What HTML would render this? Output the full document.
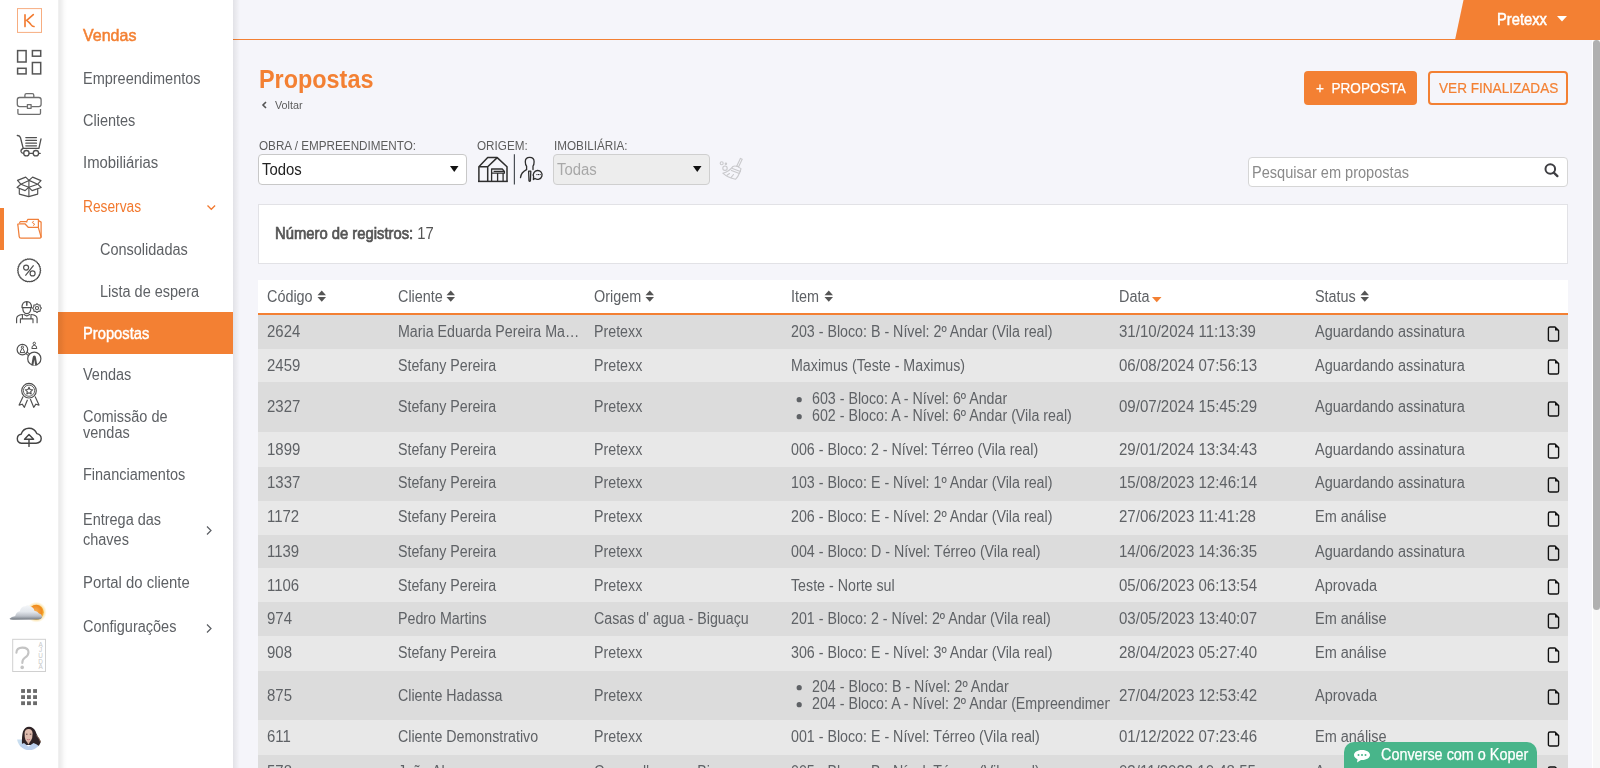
<!DOCTYPE html>
<html><head><meta charset="utf-8"><style>
*{box-sizing:border-box;margin:0;padding:0}
html,body{width:1600px;height:768px;overflow:hidden;background:#f5f5fa;font-family:"Liberation Sans",sans-serif;color:#5c5c5c}
#iconbar{position:absolute;left:0;top:0;width:58px;height:768px;background:#fff}
#sidebar{position:absolute;left:58px;top:0;width:175px;height:768px;background:#fff}
#sideshadow{position:absolute;z-index:5;left:58px;top:0;width:10px;height:768px;background:linear-gradient(to right,rgba(0,0,0,.04) 0,rgba(0,0,0,.08) 1px,rgba(0,0,0,.07) 2px,rgba(0,0,0,.05) 4px,rgba(0,0,0,.02) 6px,rgba(0,0,0,0) 9px)}
#mainshadow{position:absolute;z-index:5;left:233px;top:0;width:7px;height:768px;background:linear-gradient(to right,rgba(0,0,0,.08),rgba(0,0,0,0))}
.t{position:absolute;white-space:nowrap;line-height:1;transform-origin:0 0}
.row{position:absolute;left:258px;width:1310px}
.odd{background:#dcdcdc}.even{background:#e8e8e8}
</style></head><body>
<div id="iconbar"></div><div id="sidebar"></div><div id="sideshadow"></div><div id="mainshadow"></div>
<svg style="position:absolute;left:0;top:0" width="58" height="768" viewBox="0 0 58 768"><rect x="17.5" y="8.6" width="24" height="23.8" fill="none" stroke="#f7ad80" stroke-width="1"/><path d="M25,14.7 V26.6 M33.3,14.6 L26.7,20.3 Q29.4,22.2 31,24.6 Q32.4,26.6 34,26.5" fill="none" stroke="#f27b30" stroke-width="1.65" stroke-linecap="round" stroke-linejoin="round"/><g fill="none" stroke="#555" stroke-width="1.5"><rect x="17.6" y="50.6" width="8.5" height="11.4"/><rect x="32.4" y="50.6" width="8.3" height="5.6"/><rect x="17.6" y="68.3" width="8.5" height="5.6"/><rect x="32.4" y="62.5" width="8.3" height="11.4"/></g><g fill="none" stroke="#6e6e6e" stroke-width="1.3" stroke-linejoin="round"><path d="M24.9,96.9 V95.2 Q24.9,93.7 26.4,93.7 H32.3 Q33.8,93.7 33.8,95.2 V96.9"/><path d="M26.9,106.6 H19.6 Q17.3,106.6 17.3,104.3 V99.8 Q17.3,97.5 19.6,97.5 H38.8 Q41.1,97.5 41.1,99.8 V104.3 Q41.1,106.6 38.8,106.6 H31.4"/><rect x="27.4" y="104.6" width="3.7" height="3.7"/><path d="M17.9,108.9 V113.2 Q17.9,114.3 19,114.3 H39.4 Q40.5,114.3 40.5,113.2 V108.9"/></g><g fill="none" stroke="#505050" stroke-width="1.3" stroke-linecap="round" stroke-linejoin="round"><path d="M17.3,135.5 Q19.8,135.3 20.5,137.8 L23.2,148.3 H38.9 L41,138.8"/><path d="M23.2,148.3 Q20.4,149.6 21.1,151.8 Q21.8,153.4 23.6,153.4 M29.2,153.4 H33.1 M38.7,153.4 H40.2"/><circle cx="26.4" cy="153.2" r="2.7"/><circle cx="35.9" cy="153.2" r="2.7"/><path d="M25.8,137.6 H36.5 M25.8,140.4 H36.5 M25.8,143.2 H36.5 M25.8,145.8 H36.5" stroke-width="1.2"/></g><g fill="none" stroke="#505050" stroke-width="1.15" stroke-linejoin="round"><path d="M29,180.4 L20.8,184.2 L28.8,187.3 L37.7,184.2 Z"/><path d="M29,180.4 L25.7,177.1 L17.5,180.4 L20.8,184.2"/><path d="M29,180.4 L32.6,177.1 L41,180.6 L37.7,184.2"/><path d="M20.8,184.2 L17.1,187.5 L25.1,190.6 L28.8,187.3"/><path d="M37.7,184.2 L41.2,187.5 L32.1,190.6 L28.8,187.3"/><path d="M19.3,188.3 V194.1 L28.7,196.6 L37.7,194.1 V188.6"/><path d="M28.9,180.6 V196.5"/></g><rect x="0" y="208" width="4" height="42" fill="#f38033"/><g fill="none" stroke="#f07f3a" stroke-width="1.25" stroke-linejoin="round"><path d="M17.8,224.2 L19.2,236.6 Q19.4,238 20.8,238 H39.9 Q41.2,238 41,236.7 L38.3,227.3 H28.2 L24.9,223.8 H19.2 Q17.7,223.8 17.8,225.2 Z"/><path d="M19.4,223 L20.4,221.5 H26.4 L27.2,222.4"/><path d="M26.8,221.2 L27.9,219.3 H38.4 V227.2"/><path d="M38.5,220.6 L41.1,222.1 V237.4"/><path d="M33.7,220.9 L32.3,222.6 L34.6,224 L33.4,225.8" stroke-width="1"/></g><g fill="none" stroke="#505050" stroke-width="1.2"><polygon points="40.65,270.35 40.12,271.21 40.51,272.15 39.85,272.92 40.09,273.90 39.31,274.56 39.40,275.57 38.53,276.10 38.45,277.11 37.51,277.49 37.28,278.48 36.29,278.71 35.91,279.65 34.90,279.73 34.37,280.60 33.36,280.51 32.70,281.29 31.72,281.05 30.95,281.71 30.01,281.32 29.15,281.85 28.29,281.32 27.35,281.71 26.58,281.05 25.60,281.29 24.94,280.51 23.93,280.60 23.40,279.73 22.39,279.65 22.01,278.71 21.02,278.48 20.79,277.49 19.85,277.11 19.77,276.10 18.90,275.57 18.99,274.56 18.21,273.90 18.45,272.92 17.79,272.15 18.18,271.21 17.65,270.35 18.18,269.49 17.79,268.55 18.45,267.78 18.21,266.80 18.99,266.14 18.90,265.13 19.77,264.60 19.85,263.59 20.79,263.21 21.02,262.22 22.01,261.99 22.39,261.05 23.40,260.97 23.93,260.10 24.94,260.19 25.60,259.41 26.58,259.65 27.35,258.99 28.29,259.38 29.15,258.85 30.01,259.38 30.95,258.99 31.72,259.65 32.70,259.41 33.36,260.19 34.37,260.10 34.90,260.97 35.91,261.05 36.29,261.99 37.28,262.22 37.51,263.21 38.45,263.59 38.53,264.60 39.40,265.13 39.31,266.14 40.09,266.80 39.85,267.78 40.51,268.55 40.12,269.49"/><circle cx="26.1" cy="267.6" r="2.5"/><circle cx="32.6" cy="273.4" r="2.5"/><path d="M25.4,275.6 L33.6,265.4"/></g><g fill="none" stroke="#505050" stroke-width="1.15" stroke-linejoin="round" stroke-linecap="round"><path d="M22,307.6 Q22,301.6 26.8,301.6 Q31.5,301.6 31.5,307.6 Z"/><path d="M26.8,302.2 V305.2" stroke-width="1.5"/><path d="M22.8,308.2 Q22.9,313.4 26.8,313.6 Q30.7,313.4 30.8,308.2"/><path d="M16.6,322.7 V318.5 Q16.8,315.2 22.2,314.5 M37.1,322.7 V318.5 Q36.9,315.2 31.5,314.5"/><path d="M23.9,314.5 L26.8,315.9 L29.7,314.5"/><path d="M22.4,314.6 V318.9 H31 V314.6 M20.4,322.7 V318.9 H22.4 M33,322.7 V318.9 H31" stroke-width="1.1"/></g><polygon points="41.40,308.10 40.23,309.44 40.11,311.21 38.34,311.33 37.00,312.50 35.66,311.33 33.89,311.21 33.77,309.44 32.60,308.10 33.77,306.76 33.89,304.99 35.66,304.87 37.00,303.70 38.34,304.87 40.11,304.99 40.23,306.76" fill="none" stroke="#505050" stroke-width="1.1" stroke-linejoin="round"/><circle cx="37" cy="308.1" r="1.6" fill="none" stroke="#505050" stroke-width="1.1"/><g fill="none" stroke="#505050" stroke-width="1.2"><circle cx="22.4" cy="349.6" r="5.3"/><circle cx="34.3" cy="358.7" r="6.6"/><path d="M25.9,353.6 L28.6,355.6 M27.1,352.1 L29.8,354.1" stroke-width="1.1"/><circle cx="22.4" cy="347.2" r="1.1" stroke-width="1"/><path d="M21.9,348.4 L20,352.6 H24.8 L22.9,348.4" stroke-width="1"/><circle cx="34.3" cy="343.4" r="1.2" stroke-width="1"/><path d="M31.8,348.5 Q31.8,345.3 34.3,345.3 Q36.8,345.3 36.8,348.5 Z" stroke-width="1"/></g><path d="M34.3,355.6 Q32.8,355.6 32.6,357.8 L31.3,365.3 H37.3 L36,357.8 Q35.8,355.6 34.3,355.6 Z" fill="#505050"/><path d="M34.3,359.6 L33.4,365.4 H35.2 Z" fill="#fff"/><g fill="none" stroke="#505050" stroke-width="1.15" stroke-linejoin="round"><circle cx="29" cy="390.7" r="7.3"/><circle cx="29" cy="390.7" r="5.6" stroke-width="0.9"/><path d="M23.1,396.5 L19.1,405.1 L22.2,404.2 L24.4,407.3 L27.5,399.8"/><path d="M35.1,396.6 L39,405.1 L35.9,404.2 L33.7,407.3 L30.3,399"/><polygon points="29.00,387.30 30.06,389.54 32.52,389.86 30.71,391.56 31.17,393.99 29.00,392.80 26.83,393.99 27.29,391.56 25.48,389.86 27.94,389.54"/></g><g fill="none" stroke="#444" stroke-width="1.4" stroke-linejoin="round" stroke-linecap="round"><path d="M21.3,443.2 Q17.3,443 17.3,438.6 Q17.5,434.6 21.1,434.2 Q23.2,428.2 29,428.2 Q34.6,428.2 36.8,433.6 Q41.2,434.6 41.2,438.6 Q41,443 36.1,443.2 Z"/><path d="M29,434.5 L24.5,439.2 H33.6 Z"/><path d="M29,439.4 V446.4"/></g><defs><radialGradient id="sun" cx="0.45" cy="0.45" r="0.6"><stop offset="0" stop-color="#f7b05a"/><stop offset="0.7" stop-color="#f08a1c"/><stop offset="1" stop-color="#f6c84a"/></radialGradient><linearGradient id="cld" x1="0" y1="0" x2="0" y2="1"><stop offset="0" stop-color="#eef1f5"/><stop offset="0.55" stop-color="#d6dae0"/><stop offset="1" stop-color="#7f858d"/></linearGradient><filter id="bl" x="-20%" y="-20%" width="140%" height="140%"><feGaussianBlur stdDeviation="0.5"/></filter></defs><defs><radialGradient id="glow" cx="0.5" cy="0.5" r="0.5"><stop offset="0.6" stop-color="#f7c45a" stop-opacity=".9"/><stop offset="1" stop-color="#fbe3a0" stop-opacity="0"/></radialGradient><linearGradient id="cld2" x1="0" y1="0" x2="0" y2="1"><stop offset="0" stop-color="#f4f6f9"/><stop offset="0.45" stop-color="#e3e7ec"/><stop offset="0.75" stop-color="#b9bec6"/><stop offset="1" stop-color="#6f757d"/></linearGradient></defs><circle cx="36.3" cy="612.2" r="10.5" fill="url(#glow)"/><circle cx="36.3" cy="612.2" r="7.5" fill="url(#sun)"/><g filter="url(#bl)" fill="url(#cld2)"><path d="M9.5,618.8 Q11.5,616.6 15.2,616 Q16.2,611.8 19.8,611.2 Q21,606.2 25.2,606.2 Q28,604.2 30.8,606.8 Q33.8,607.4 34.4,610.8 Q37.8,611.2 39,613.6 Q42.2,614.2 42,617.6 Q41.2,619.6 38,619.5 L13.5,619.8 Q10,619.9 9.5,618.8 Z"/></g><path d="M13,618.8 H39" stroke="#6a7078" stroke-width="1.2" opacity=".6" filter="url(#bl)"/><rect x="12.7" y="639.3" width="32.8" height="32.2" fill="none" stroke="#d0d0d0" stroke-width="1"/><path d="M16.4,652.8 Q16.6,647.6 22.3,647.6 Q28.5,647.6 28.5,652.3 Q28.5,655.5 25,657.7 Q22.3,659.4 22.3,663" fill="none" stroke="#c4c4c4" stroke-width="2.1" stroke-linecap="round"/><circle cx="22.2" cy="667.4" r="1.8" fill="#c4c4c4"/><text x="40.6" y="646.6" font-family="Liberation Sans" font-size="6.4" fill="#c8c8c8" text-anchor="middle">A</text><text x="40.6" y="652.3" font-family="Liberation Sans" font-size="6.4" fill="#c8c8c8" text-anchor="middle">J</text><text x="40.6" y="658.0" font-family="Liberation Sans" font-size="6.4" fill="#c8c8c8" text-anchor="middle">U</text><text x="40.6" y="663.7" font-family="Liberation Sans" font-size="6.4" fill="#c8c8c8" text-anchor="middle">D</text><text x="40.6" y="669.4" font-family="Liberation Sans" font-size="6.4" fill="#c8c8c8" text-anchor="middle">A</text><rect x="21.1" y="689.1" width="3.9" height="3.8" fill="#6b6b6b"/><rect x="21.1" y="695.2" width="3.9" height="3.8" fill="#6b6b6b"/><rect x="21.1" y="701.3" width="3.9" height="3.8" fill="#6b6b6b"/><rect x="27.0" y="689.1" width="3.9" height="3.8" fill="#6b6b6b"/><rect x="27.0" y="695.2" width="3.9" height="3.8" fill="#6b6b6b"/><rect x="27.0" y="701.3" width="3.9" height="3.8" fill="#6b6b6b"/><rect x="33.1" y="689.1" width="3.9" height="3.8" fill="#6b6b6b"/><rect x="33.1" y="695.2" width="3.9" height="3.8" fill="#6b6b6b"/><rect x="33.1" y="701.3" width="3.9" height="3.8" fill="#6b6b6b"/><defs><clipPath id="av"><circle cx="29.3" cy="737.8" r="12.3"/></clipPath></defs><g clip-path="url(#av)"><g filter="url(#bl)"><rect x="16" y="724" width="27" height="27" fill="#fff"/><rect x="16" y="739.5" width="6" height="6" fill="#c9def0"/><path d="M22,745 Q21.6,736 23,731.5 Q24.8,726.8 29,726.8 Q33.4,727 35.4,731 Q36.6,734.5 38.4,737.5 Q40.6,740.5 41.6,744 L38.6,747 L34.5,745 Z" fill="#2e2426"/><path d="M36.5,735.5 Q39.5,738.5 40.5,742" stroke="#8a6a5a" stroke-width="1" fill="none"/><path d="M24.6,733 Q24.9,729 28.7,729 Q32.4,729.2 32.6,733.4 Q32.6,738.2 31,740.6 Q29.6,742.2 28.4,742.2 Q26.6,742 25.5,740 Q24.4,737.4 24.6,733 Z" fill="#e0bcae"/><path d="M26.9,739.4 Q28.5,740.2 30.1,739.4" stroke="#c0767a" stroke-width=".9" fill="none"/><path d="M26,734.2 H27.5 M29.8,734.2 H31.3" stroke="#4a3434" stroke-width=".9"/><path d="M26.5,741 L28.4,744.5 L30.5,741 Z" fill="#d7b0a2"/><path d="M15,752 Q17.5,745 24,743 L28.4,746.4 L33.5,743 Q39.5,744.5 43,752 Z" fill="#bcd0ee"/></g></g></svg>
<div style="position:absolute;left:233px;top:39px;width:1230px;height:1px;background:#f38033"></div>
<svg style="position:absolute;left:1455px;top:0" width="145" height="40"><polygon points="8.5,0 145,0 145,40 0,40" fill="#f38033"/></svg>
<div class="t" style="left:1496.5px;top:12.3px;font-size:16px;color:#fff;font-weight:normal;transform:scaleX(0.920);-webkit-text-stroke:.5px #fff">Pretexx</div>
<svg style="position:absolute;left:1557px;top:16px" width="10" height="6"><polygon points="0,0 10,0 5,5.5" fill="#fff"/></svg>
<div style="position:absolute;left:1592px;top:40px;width:8px;height:728px;background:linear-gradient(to right,#fff 0,#fff 1px,#f7f7f7 1px)"></div>
<div style="position:absolute;left:1593px;top:40px;width:7px;height:570px;background:#b0b0b0;border-radius:4px"></div>
<div class="t" style="left:83.2px;top:27.3px;font-size:16.5px;color:#f38033;font-weight:normal;transform:scaleX(0.970);-webkit-text-stroke:.5px #f38033">Vendas</div>
<div class="t" style="left:83.0px;top:70.5px;font-size:16px;color:#5e6165;font-weight:normal;transform:scaleX(0.905);">Empreendimentos</div>
<div class="t" style="left:83.0px;top:112.5px;font-size:16px;color:#5e6165;font-weight:normal;transform:scaleX(0.905);">Clientes</div>
<div class="t" style="left:83.0px;top:154.8px;font-size:16px;color:#5e6165;font-weight:normal;transform:scaleX(0.930);">Imobiliárias</div>
<div class="t" style="left:83.0px;top:199.4px;font-size:16px;color:#f2792f;font-weight:normal;transform:scaleX(0.860);">Reservas</div>
<div class="t" style="left:100.0px;top:242.3px;font-size:16px;color:#5e6165;font-weight:normal;transform:scaleX(0.905);">Consolidadas</div>
<div class="t" style="left:99.7px;top:283.9px;font-size:16px;color:#5e6165;font-weight:normal;transform:scaleX(0.905);">Lista de espera</div>
<div style="position:absolute;left:58px;top:312px;width:175px;height:42px;background:#f38033"></div>
<div class="t" style="left:83.0px;top:325.7px;font-size:16px;color:#fff;font-weight:normal;transform:scaleX(0.920);-webkit-text-stroke:.45px #fff">Propostas</div>
<div class="t" style="left:83.0px;top:367.2px;font-size:16px;color:#5e6165;font-weight:normal;transform:scaleX(0.905);">Vendas</div>
<div class="t" style="left:83.0px;top:409.0px;font-size:16px;color:#5e6165;font-weight:normal;transform:scaleX(0.905);">Comissão de</div>
<div class="t" style="left:83.0px;top:425.0px;font-size:16px;color:#5e6165;font-weight:normal;transform:scaleX(0.905);">vendas</div>
<div class="t" style="left:83.0px;top:467.3px;font-size:16px;color:#5e6165;font-weight:normal;transform:scaleX(0.905);">Financiamentos</div>
<div class="t" style="left:83.0px;top:511.6px;font-size:16px;color:#5e6165;font-weight:normal;transform:scaleX(0.905);">Entrega das</div>
<div class="t" style="left:83.0px;top:531.6px;font-size:16px;color:#5e6165;font-weight:normal;transform:scaleX(0.905);">chaves</div>
<div class="t" style="left:83.0px;top:575.0px;font-size:16px;color:#5e6165;font-weight:normal;transform:scaleX(0.930);">Portal do cliente</div>
<div class="t" style="left:83.0px;top:619.0px;font-size:16px;color:#5e6165;font-weight:normal;transform:scaleX(0.905);">Configurações</div>
<svg style="position:absolute;left:205.5px;top:202.8px" width="11" height="9"><polyline points="1.5,2.5 5.3,6.3 9.1,2.5" fill="none" stroke="#f2792f" stroke-width="1.3"/></svg>
<svg style="position:absolute;left:205px;top:525px" width="8" height="12"><polyline points="2,1.5 6,5.5 2,9.5" fill="none" stroke="#5a5d62" stroke-width="1.2"/></svg>
<svg style="position:absolute;left:205px;top:623px" width="8" height="12"><polyline points="2,1.5 6,5.5 2,9.5" fill="none" stroke="#5a5d62" stroke-width="1.2"/></svg>
<div class="t" style="left:259.0px;top:66.0px;font-size:26px;color:#f38033;font-weight:bold;transform:scaleX(0.900);">Propostas</div>
<svg style="position:absolute;left:261px;top:101px" width="7" height="8"><polyline points="5,1 2,4 5,7" fill="none" stroke="#555" stroke-width="1.6"/></svg>
<div class="t" style="left:275.0px;top:100.0px;font-size:11px;color:#5c5c5c;font-weight:normal;transform:scaleX(0.980);">Voltar</div>
<div class="t" style="left:258.6px;top:139.7px;font-size:12px;color:#5c5c5c;font-weight:normal;transform:scaleX(0.975);">OBRA / EMPREENDIMENTO:</div>
<div class="t" style="left:477.3px;top:139.7px;font-size:12px;color:#5c5c5c;font-weight:normal;transform:scaleX(0.975);">ORIGEM:</div>
<div class="t" style="left:553.7px;top:139.7px;font-size:12px;color:#5c5c5c;font-weight:normal;transform:scaleX(0.975);">IMOBILIÁRIA:</div>
<div style="position:absolute;left:258px;top:154px;width:209px;height:31px;background:#fff;border:1px solid #c8c8c8;border-radius:4px"></div>
<div class="t" style="left:262.2px;top:161.8px;font-size:16px;color:#222;font-weight:normal;transform:scaleX(0.930);">Todos</div>
<svg style="position:absolute;left:449.5px;top:166px" width="9" height="7"><polygon points="0,0 8.5,0 4.25,6" fill="#111"/></svg>
<svg style="position:absolute;left:470px;top:150px" width="80" height="40" viewBox="470 150 80 40"><g fill="none" stroke="#2e2e2e" stroke-width="1.5" stroke-linejoin="round"><path d="M478,181.4 H507.8"/><path d="M478.9,181.4 V166.8 L487.7,157.6 H497.2 L507,166.8 V181.4"/><path d="M478.9,166.8 H487.7 L497.2,157.6 M487.7,166.8 V181.4"/><path d="M491.6,181.4 V169 H502.3 L504.4,171.4 V173.2 H491.6 M493.6,171.4 H503.8 M497.6,173.2 V181.4 M503.1,173.2 V181.4" stroke-width="1.3"/></g><path d="M514.4,154.2 V184.6" stroke="#4a4f55" stroke-width="1.2"/><g fill="none" stroke="#2e2e2e" stroke-width="1.3" stroke-linejoin="round" stroke-linecap="round"><path d="M526.6,169.6 V166.2 Q525.3,164.8 525.3,161.8 Q525.3,157.4 529.7,157.4 Q534.1,157.4 534.1,161.8 Q534.1,164.8 533,166.2 V169.6"/><path d="M526.5,169.6 Q521,172.4 520.5,177.6"/><path d="M528.6,171.2 H530.8 L530.4,180.8 Q529.7,181.8 529,180.8 Z"/><path d="M535,178.4 A4.4,4.4 0 1 0 533.6,176.6 L533.4,179.6 Z"/></g><g fill="#2e2e2e"><rect x="536.4" y="174" width="1.1" height="1.1"/><rect x="538" y="174" width="1.1" height="1.1"/><rect x="539.6" y="174" width="1.1" height="1.1"/></g></svg><svg style="position:absolute;left:714px;top:150px" width="36" height="36" viewBox="714 150 36 36"><g fill="none" stroke="#c9c9cc" stroke-width="1.1" stroke-linejoin="round" stroke-linecap="round"><path d="M740.4,158.4 L742.2,159.2 L738.6,166.8 L736.8,166"/><path d="M740.4,158.4 L736.8,166"/><path d="M733,166.4 Q736,165 741,168.6 L740,172 Q738,177 735.5,179.3 Q728,178 722.8,173.2 Q729,172 733,166.4 Z"/><path d="M732.4,168.6 L740.4,171.4 M731.5,170.4 L739.4,173.4 M727,175.2 L729.5,173.5 M731,177.6 L733.5,174.5"/><circle cx="725" cy="168.2" r="2.2"/><circle cx="721.7" cy="163.3" r="1.5"/><circle cx="725.9" cy="163.7" r="0.7"/></g></svg>
<div style="position:absolute;left:553px;top:154px;width:157px;height:31px;background:#ededed;border:1px solid #cfcfcf;border-radius:4px"></div>
<div class="t" style="left:557.0px;top:161.8px;font-size:16px;color:#a8a8a8;font-weight:normal;transform:scaleX(0.930);">Todas</div>
<svg style="position:absolute;left:692.5px;top:166px" width="9" height="7"><polygon points="0,0 8.5,0 4.25,6" fill="#111"/></svg>
<div style="position:absolute;left:1304px;top:71px;width:113px;height:34px;background:#f38033;border-radius:4px"></div>
<div class="t" style="left:1316.3px;top:80.0px;font-size:15px;color:#fff;font-weight:normal;transform:scaleX(0.905);-webkit-text-stroke:.25px #fff">+&nbsp; PROPOSTA</div>
<div style="position:absolute;left:1428px;top:71px;width:140px;height:34px;background:transparent;border:2px solid #f38033;border-radius:4px"></div>
<div class="t" style="left:1438.6px;top:80.3px;font-size:15px;color:#f38033;font-weight:normal;transform:scaleX(0.906);-webkit-text-stroke:.2px #f38033">VER FINALIZADAS</div>
<div style="position:absolute;left:1248px;top:157px;width:320px;height:30px;background:#fff;border:1px solid #d6d6d6;border-radius:4px"></div>
<div class="t" style="left:1252.0px;top:165.4px;font-size:16px;color:#8a8a8a;font-weight:normal;transform:scaleX(0.910);">Pesquisar em propostas</div>
<svg style="position:absolute;left:1544px;top:163px" width="16" height="16"><circle cx="6.3" cy="6" r="4.8" fill="none" stroke="#3e3e42" stroke-width="2"/><line x1="9.8" y1="9.6" x2="13.4" y2="13.1" stroke="#3e3e42" stroke-width="2.3" stroke-linecap="round"/></svg>
<div style="position:absolute;left:258px;top:204px;width:1310px;height:60px;background:#fff;border:1px solid #e2e2e6"></div>
<div class="t" style="left:275.0px;top:225.9px;font-size:16px;color:#555;font-weight:normal;transform:scaleX(0.925);"><span style="-webkit-text-stroke:.7px #555">Número de registros:</span> 17</div>
<div style="position:absolute;left:258px;top:280px;width:1310px;height:33px;background:#fff"></div>
<div style="position:absolute;left:258px;top:313px;width:1310px;height:2px;background:#f38033"></div>
<div class="t" style="left:267.0px;top:288.5px;font-size:16px;color:#5e6165;font-weight:normal;transform:scaleX(0.900);">Código</div>
<svg style="position:absolute;left:316.5px;top:290px" width="10" height="13"><polygon points="0.5,5.2 9,5.2 4.75,0.5" fill="#555"/><polygon points="0.5,7 9,7 4.75,11.7" fill="#555"/></svg>
<div class="t" style="left:398.0px;top:288.5px;font-size:16px;color:#5e6165;font-weight:normal;transform:scaleX(0.900);">Cliente</div>
<svg style="position:absolute;left:446.0px;top:290px" width="10" height="13"><polygon points="0.5,5.2 9,5.2 4.75,0.5" fill="#555"/><polygon points="0.5,7 9,7 4.75,11.7" fill="#555"/></svg>
<div class="t" style="left:594.0px;top:288.5px;font-size:16px;color:#5e6165;font-weight:normal;transform:scaleX(0.900);">Origem</div>
<svg style="position:absolute;left:644.5px;top:290px" width="10" height="13"><polygon points="0.5,5.2 9,5.2 4.75,0.5" fill="#555"/><polygon points="0.5,7 9,7 4.75,11.7" fill="#555"/></svg>
<div class="t" style="left:791.0px;top:288.5px;font-size:16px;color:#5e6165;font-weight:normal;transform:scaleX(0.900);">Item</div>
<svg style="position:absolute;left:823.5px;top:290px" width="10" height="13"><polygon points="0.5,5.2 9,5.2 4.75,0.5" fill="#555"/><polygon points="0.5,7 9,7 4.75,11.7" fill="#555"/></svg>
<div class="t" style="left:1119.0px;top:288.5px;font-size:16px;color:#5e6165;font-weight:normal;transform:scaleX(0.900);">Data</div>
<div class="t" style="left:1315.0px;top:288.5px;font-size:16px;color:#5e6165;font-weight:normal;transform:scaleX(0.900);">Status</div>
<svg style="position:absolute;left:1359.5px;top:290px" width="10" height="13"><polygon points="0.5,5.2 9,5.2 4.75,0.5" fill="#555"/><polygon points="0.5,7 9,7 4.75,11.7" fill="#555"/></svg>
<svg style="position:absolute;left:1151.5px;top:297px" width="10" height="6"><polygon points="0,0 9.5,0 4.75,5.2" fill="#f38033"/></svg>
<div class="row odd" style="top:315.0px;height:34.3px"></div>
<div class="t" style="left:266.7px;top:324.0px;font-size:16px;color:#5f6266;font-weight:normal;transform:scaleX(0.935);">2624</div>
<div class="t" style="left:398.0px;top:324.0px;font-size:16px;color:#5f6266;font-weight:normal;transform:scaleX(0.890);">Maria Eduarda Pereira Ma…</div>
<div class="t" style="left:594.0px;top:324.0px;font-size:16px;color:#5f6266;font-weight:normal;transform:scaleX(0.890);">Pretexx</div>
<div class="t" style="left:791.0px;top:324.0px;font-size:16px;color:#5f6266;font-weight:normal;transform:scaleX(0.890);">203 - Bloco: B - Nível: 2º Andar (Vila real)</div>
<div class="t" style="left:1118.5px;top:324.0px;font-size:16px;color:#5f6266;font-weight:normal;transform:scaleX(0.940);">31/10/2024 11:13:39</div>
<div class="t" style="left:1315.0px;top:324.0px;font-size:16px;color:#5f6266;font-weight:normal;transform:scaleX(0.905);">Aguardando assinatura</div>
<svg style="position:absolute;left:1546.5px;top:325.7px" width="13" height="16"><path d="M1.4,2.6 Q1.4,1 3,1 L8,1 L11.6,4.6 L11.6,13.4 Q11.6,15 10,15 L3,15 Q1.4,15 1.4,13.4 Z" fill="none" stroke="#111" stroke-width="1.35" stroke-linejoin="round"/><path d="M8,1 L11.6,4.6 L8,4.6 Z" fill="#111"/></svg>
<div class="row even" style="top:348.7px;height:34.1px"></div>
<div class="t" style="left:266.7px;top:358.0px;font-size:16px;color:#5f6266;font-weight:normal;transform:scaleX(0.935);">2459</div>
<div class="t" style="left:398.0px;top:358.0px;font-size:16px;color:#5f6266;font-weight:normal;transform:scaleX(0.890);">Stefany Pereira</div>
<div class="t" style="left:594.0px;top:358.0px;font-size:16px;color:#5f6266;font-weight:normal;transform:scaleX(0.890);">Pretexx</div>
<div class="t" style="left:791.0px;top:358.0px;font-size:16px;color:#5f6266;font-weight:normal;transform:scaleX(0.890);">Maximus (Teste - Maximus)</div>
<div class="t" style="left:1118.5px;top:358.0px;font-size:16px;color:#5f6266;font-weight:normal;transform:scaleX(0.940);">06/08/2024 07:56:13</div>
<div class="t" style="left:1315.0px;top:358.0px;font-size:16px;color:#5f6266;font-weight:normal;transform:scaleX(0.905);">Aguardando assinatura</div>
<svg style="position:absolute;left:1546.5px;top:359.2px" width="13" height="16"><path d="M1.4,2.6 Q1.4,1 3,1 L8,1 L11.6,4.6 L11.6,13.4 Q11.6,15 10,15 L3,15 Q1.4,15 1.4,13.4 Z" fill="none" stroke="#111" stroke-width="1.35" stroke-linejoin="round"/><path d="M8,1 L11.6,4.6 L8,4.6 Z" fill="#111"/></svg>
<div class="row odd" style="top:382.2px;height:50.3px"></div>
<div class="t" style="left:266.7px;top:399.0px;font-size:16px;color:#5f6266;font-weight:normal;transform:scaleX(0.935);">2327</div>
<div class="t" style="left:398.0px;top:399.0px;font-size:16px;color:#5f6266;font-weight:normal;transform:scaleX(0.890);">Stefany Pereira</div>
<div class="t" style="left:594.0px;top:399.0px;font-size:16px;color:#5f6266;font-weight:normal;transform:scaleX(0.890);">Pretexx</div>
<svg style="position:absolute;left:796px;top:396px" width="7" height="7"><circle cx="3.2" cy="3.7" r="2.6" fill="#5f6266"/></svg>
<div style="position:absolute;left:811.9px;top:390px;width:298px;height:20px;overflow:hidden">
<div class="t" style="left:0;top:1px;font-size:16px;color:#5f6266;transform:scaleX(.89)">603 - Bloco: A - Nível: 6º Andar</div></div>
<svg style="position:absolute;left:796px;top:413px" width="7" height="7"><circle cx="3.2" cy="3.7" r="2.6" fill="#5f6266"/></svg>
<div style="position:absolute;left:811.9px;top:407px;width:298px;height:20px;overflow:hidden">
<div class="t" style="left:0;top:1px;font-size:16px;color:#5f6266;transform:scaleX(.89)">602 - Bloco: A - Nível: 6º Andar (Vila real)</div></div>
<div class="t" style="left:1118.5px;top:399.0px;font-size:16px;color:#5f6266;font-weight:normal;transform:scaleX(0.940);">09/07/2024 15:45:29</div>
<div class="t" style="left:1315.0px;top:399.0px;font-size:16px;color:#5f6266;font-weight:normal;transform:scaleX(0.905);">Aguardando assinatura</div>
<svg style="position:absolute;left:1546.5px;top:400.8px" width="13" height="16"><path d="M1.4,2.6 Q1.4,1 3,1 L8,1 L11.6,4.6 L11.6,13.4 Q11.6,15 10,15 L3,15 Q1.4,15 1.4,13.4 Z" fill="none" stroke="#111" stroke-width="1.35" stroke-linejoin="round"/><path d="M8,1 L11.6,4.6 L8,4.6 Z" fill="#111"/></svg>
<div class="row even" style="top:431.9px;height:35.3px"></div>
<div class="t" style="left:266.7px;top:442.0px;font-size:16px;color:#5f6266;font-weight:normal;transform:scaleX(0.935);">1899</div>
<div class="t" style="left:398.0px;top:442.0px;font-size:16px;color:#5f6266;font-weight:normal;transform:scaleX(0.890);">Stefany Pereira</div>
<div class="t" style="left:594.0px;top:442.0px;font-size:16px;color:#5f6266;font-weight:normal;transform:scaleX(0.890);">Pretexx</div>
<div class="t" style="left:791.0px;top:442.0px;font-size:16px;color:#5f6266;font-weight:normal;transform:scaleX(0.890);">006 - Bloco: 2 - Nível: Térreo (Vila real)</div>
<div class="t" style="left:1118.5px;top:442.0px;font-size:16px;color:#5f6266;font-weight:normal;transform:scaleX(0.940);">29/01/2024 13:34:43</div>
<div class="t" style="left:1315.0px;top:442.0px;font-size:16px;color:#5f6266;font-weight:normal;transform:scaleX(0.905);">Aguardando assinatura</div>
<svg style="position:absolute;left:1546.5px;top:443.1px" width="13" height="16"><path d="M1.4,2.6 Q1.4,1 3,1 L8,1 L11.6,4.6 L11.6,13.4 Q11.6,15 10,15 L3,15 Q1.4,15 1.4,13.4 Z" fill="none" stroke="#111" stroke-width="1.35" stroke-linejoin="round"/><path d="M8,1 L11.6,4.6 L8,4.6 Z" fill="#111"/></svg>
<div class="row odd" style="top:466.6px;height:34.5px"></div>
<div class="t" style="left:266.7px;top:475.0px;font-size:16px;color:#5f6266;font-weight:normal;transform:scaleX(0.935);">1337</div>
<div class="t" style="left:398.0px;top:475.0px;font-size:16px;color:#5f6266;font-weight:normal;transform:scaleX(0.890);">Stefany Pereira</div>
<div class="t" style="left:594.0px;top:475.0px;font-size:16px;color:#5f6266;font-weight:normal;transform:scaleX(0.890);">Pretexx</div>
<div class="t" style="left:791.0px;top:475.0px;font-size:16px;color:#5f6266;font-weight:normal;transform:scaleX(0.890);">103 - Bloco: E - Nível: 1º Andar (Vila real)</div>
<div class="t" style="left:1118.5px;top:475.0px;font-size:16px;color:#5f6266;font-weight:normal;transform:scaleX(0.940);">15/08/2023 12:46:14</div>
<div class="t" style="left:1315.0px;top:475.0px;font-size:16px;color:#5f6266;font-weight:normal;transform:scaleX(0.905);">Aguardando assinatura</div>
<svg style="position:absolute;left:1546.5px;top:477.4px" width="13" height="16"><path d="M1.4,2.6 Q1.4,1 3,1 L8,1 L11.6,4.6 L11.6,13.4 Q11.6,15 10,15 L3,15 Q1.4,15 1.4,13.4 Z" fill="none" stroke="#111" stroke-width="1.35" stroke-linejoin="round"/><path d="M8,1 L11.6,4.6 L8,4.6 Z" fill="#111"/></svg>
<div class="row even" style="top:500.5px;height:34.6px"></div>
<div class="t" style="left:266.7px;top:509.0px;font-size:16px;color:#5f6266;font-weight:normal;transform:scaleX(0.935);">1172</div>
<div class="t" style="left:398.0px;top:509.0px;font-size:16px;color:#5f6266;font-weight:normal;transform:scaleX(0.890);">Stefany Pereira</div>
<div class="t" style="left:594.0px;top:509.0px;font-size:16px;color:#5f6266;font-weight:normal;transform:scaleX(0.890);">Pretexx</div>
<div class="t" style="left:791.0px;top:509.0px;font-size:16px;color:#5f6266;font-weight:normal;transform:scaleX(0.890);">206 - Bloco: E - Nível: 2º Andar (Vila real)</div>
<div class="t" style="left:1118.5px;top:509.0px;font-size:16px;color:#5f6266;font-weight:normal;transform:scaleX(0.940);">27/06/2023 11:41:28</div>
<div class="t" style="left:1315.0px;top:509.0px;font-size:16px;color:#5f6266;font-weight:normal;transform:scaleX(0.905);">Em análise</div>
<svg style="position:absolute;left:1546.5px;top:511.3px" width="13" height="16"><path d="M1.4,2.6 Q1.4,1 3,1 L8,1 L11.6,4.6 L11.6,13.4 Q11.6,15 10,15 L3,15 Q1.4,15 1.4,13.4 Z" fill="none" stroke="#111" stroke-width="1.35" stroke-linejoin="round"/><path d="M8,1 L11.6,4.6 L8,4.6 Z" fill="#111"/></svg>
<div class="row odd" style="top:534.5px;height:34.5px"></div>
<div class="t" style="left:266.7px;top:544.0px;font-size:16px;color:#5f6266;font-weight:normal;transform:scaleX(0.935);">1139</div>
<div class="t" style="left:398.0px;top:544.0px;font-size:16px;color:#5f6266;font-weight:normal;transform:scaleX(0.890);">Stefany Pereira</div>
<div class="t" style="left:594.0px;top:544.0px;font-size:16px;color:#5f6266;font-weight:normal;transform:scaleX(0.890);">Pretexx</div>
<div class="t" style="left:791.0px;top:544.0px;font-size:16px;color:#5f6266;font-weight:normal;transform:scaleX(0.890);">004 - Bloco: D - Nível: Térreo (Vila real)</div>
<div class="t" style="left:1118.5px;top:544.0px;font-size:16px;color:#5f6266;font-weight:normal;transform:scaleX(0.940);">14/06/2023 14:36:35</div>
<div class="t" style="left:1315.0px;top:544.0px;font-size:16px;color:#5f6266;font-weight:normal;transform:scaleX(0.905);">Aguardando assinatura</div>
<svg style="position:absolute;left:1546.5px;top:545.2px" width="13" height="16"><path d="M1.4,2.6 Q1.4,1 3,1 L8,1 L11.6,4.6 L11.6,13.4 Q11.6,15 10,15 L3,15 Q1.4,15 1.4,13.4 Z" fill="none" stroke="#111" stroke-width="1.35" stroke-linejoin="round"/><path d="M8,1 L11.6,4.6 L8,4.6 Z" fill="#111"/></svg>
<div class="row even" style="top:568.4px;height:34.5px"></div>
<div class="t" style="left:266.7px;top:578.0px;font-size:16px;color:#5f6266;font-weight:normal;transform:scaleX(0.935);">1106</div>
<div class="t" style="left:398.0px;top:578.0px;font-size:16px;color:#5f6266;font-weight:normal;transform:scaleX(0.890);">Stefany Pereira</div>
<div class="t" style="left:594.0px;top:578.0px;font-size:16px;color:#5f6266;font-weight:normal;transform:scaleX(0.890);">Pretexx</div>
<div class="t" style="left:791.0px;top:578.0px;font-size:16px;color:#5f6266;font-weight:normal;transform:scaleX(0.890);">Teste - Norte sul</div>
<div class="t" style="left:1118.5px;top:578.0px;font-size:16px;color:#5f6266;font-weight:normal;transform:scaleX(0.940);">05/06/2023 06:13:54</div>
<div class="t" style="left:1315.0px;top:578.0px;font-size:16px;color:#5f6266;font-weight:normal;transform:scaleX(0.905);">Aprovada</div>
<svg style="position:absolute;left:1546.5px;top:579.1px" width="13" height="16"><path d="M1.4,2.6 Q1.4,1 3,1 L8,1 L11.6,4.6 L11.6,13.4 Q11.6,15 10,15 L3,15 Q1.4,15 1.4,13.4 Z" fill="none" stroke="#111" stroke-width="1.35" stroke-linejoin="round"/><path d="M8,1 L11.6,4.6 L8,4.6 Z" fill="#111"/></svg>
<div class="row odd" style="top:602.3px;height:34.5px"></div>
<div class="t" style="left:266.7px;top:611.0px;font-size:16px;color:#5f6266;font-weight:normal;transform:scaleX(0.935);">974</div>
<div class="t" style="left:398.0px;top:611.0px;font-size:16px;color:#5f6266;font-weight:normal;transform:scaleX(0.890);">Pedro Martins</div>
<div class="t" style="left:594.0px;top:611.0px;font-size:16px;color:#5f6266;font-weight:normal;transform:scaleX(0.890);">Casas d' agua - Biguaçu</div>
<div class="t" style="left:791.0px;top:611.0px;font-size:16px;color:#5f6266;font-weight:normal;transform:scaleX(0.890);">201 - Bloco: 2 - Nível: 2º Andar (Vila real)</div>
<div class="t" style="left:1118.5px;top:611.0px;font-size:16px;color:#5f6266;font-weight:normal;transform:scaleX(0.940);">03/05/2023 13:40:07</div>
<div class="t" style="left:1315.0px;top:611.0px;font-size:16px;color:#5f6266;font-weight:normal;transform:scaleX(0.905);">Em análise</div>
<svg style="position:absolute;left:1546.5px;top:613.0px" width="13" height="16"><path d="M1.4,2.6 Q1.4,1 3,1 L8,1 L11.6,4.6 L11.6,13.4 Q11.6,15 10,15 L3,15 Q1.4,15 1.4,13.4 Z" fill="none" stroke="#111" stroke-width="1.35" stroke-linejoin="round"/><path d="M8,1 L11.6,4.6 L8,4.6 Z" fill="#111"/></svg>
<div class="row even" style="top:636.2px;height:35.2px"></div>
<div class="t" style="left:266.7px;top:645.0px;font-size:16px;color:#5f6266;font-weight:normal;transform:scaleX(0.935);">908</div>
<div class="t" style="left:398.0px;top:645.0px;font-size:16px;color:#5f6266;font-weight:normal;transform:scaleX(0.890);">Stefany Pereira</div>
<div class="t" style="left:594.0px;top:645.0px;font-size:16px;color:#5f6266;font-weight:normal;transform:scaleX(0.890);">Pretexx</div>
<div class="t" style="left:791.0px;top:645.0px;font-size:16px;color:#5f6266;font-weight:normal;transform:scaleX(0.890);">306 - Bloco: E - Nível: 3º Andar (Vila real)</div>
<div class="t" style="left:1118.5px;top:645.0px;font-size:16px;color:#5f6266;font-weight:normal;transform:scaleX(0.940);">28/04/2023 05:27:40</div>
<div class="t" style="left:1315.0px;top:645.0px;font-size:16px;color:#5f6266;font-weight:normal;transform:scaleX(0.905);">Em análise</div>
<svg style="position:absolute;left:1546.5px;top:647.3px" width="13" height="16"><path d="M1.4,2.6 Q1.4,1 3,1 L8,1 L11.6,4.6 L11.6,13.4 Q11.6,15 10,15 L3,15 Q1.4,15 1.4,13.4 Z" fill="none" stroke="#111" stroke-width="1.35" stroke-linejoin="round"/><path d="M8,1 L11.6,4.6 L8,4.6 Z" fill="#111"/></svg>
<div class="row odd" style="top:670.8px;height:50.0px"></div>
<div class="t" style="left:266.7px;top:688.0px;font-size:16px;color:#5f6266;font-weight:normal;transform:scaleX(0.935);">875</div>
<div class="t" style="left:398.0px;top:688.0px;font-size:16px;color:#5f6266;font-weight:normal;transform:scaleX(0.890);">Cliente Hadassa</div>
<div class="t" style="left:594.0px;top:688.0px;font-size:16px;color:#5f6266;font-weight:normal;transform:scaleX(0.890);">Pretexx</div>
<svg style="position:absolute;left:796px;top:684px" width="7" height="7"><circle cx="3.2" cy="3.7" r="2.6" fill="#5f6266"/></svg>
<div style="position:absolute;left:811.9px;top:678px;width:298px;height:20px;overflow:hidden">
<div class="t" style="left:0;top:1px;font-size:16px;color:#5f6266;transform:scaleX(.89)">204 - Bloco: B - Nível: 2º Andar</div></div>
<svg style="position:absolute;left:796px;top:701px" width="7" height="7"><circle cx="3.2" cy="3.7" r="2.6" fill="#5f6266"/></svg>
<div style="position:absolute;left:811.9px;top:695px;width:298px;height:20px;overflow:hidden">
<div class="t" style="left:0;top:1px;font-size:16px;color:#5f6266;transform:scaleX(.89)">204 - Bloco: A - Nível: 2º Andar (Empreendimento Vila real)</div></div>
<div class="t" style="left:1118.5px;top:688.0px;font-size:16px;color:#5f6266;font-weight:normal;transform:scaleX(0.940);">27/04/2023 12:53:42</div>
<div class="t" style="left:1315.0px;top:688.0px;font-size:16px;color:#5f6266;font-weight:normal;transform:scaleX(0.905);">Aprovada</div>
<svg style="position:absolute;left:1546.5px;top:689.3px" width="13" height="16"><path d="M1.4,2.6 Q1.4,1 3,1 L8,1 L11.6,4.6 L11.6,13.4 Q11.6,15 10,15 L3,15 Q1.4,15 1.4,13.4 Z" fill="none" stroke="#111" stroke-width="1.35" stroke-linejoin="round"/><path d="M8,1 L11.6,4.6 L8,4.6 Z" fill="#111"/></svg>
<div class="row even" style="top:720.2px;height:35.1px"></div>
<div class="t" style="left:266.7px;top:729.0px;font-size:16px;color:#5f6266;font-weight:normal;transform:scaleX(0.935);">611</div>
<div class="t" style="left:398.0px;top:729.0px;font-size:16px;color:#5f6266;font-weight:normal;transform:scaleX(0.890);">Cliente Demonstrativo</div>
<div class="t" style="left:594.0px;top:729.0px;font-size:16px;color:#5f6266;font-weight:normal;transform:scaleX(0.890);">Pretexx</div>
<div class="t" style="left:791.0px;top:729.0px;font-size:16px;color:#5f6266;font-weight:normal;transform:scaleX(0.890);">001 - Bloco: E - Nível: Térreo (Vila real)</div>
<div class="t" style="left:1118.5px;top:729.0px;font-size:16px;color:#5f6266;font-weight:normal;transform:scaleX(0.940);">01/12/2022 07:23:46</div>
<div class="t" style="left:1315.0px;top:729.0px;font-size:16px;color:#5f6266;font-weight:normal;transform:scaleX(0.905);">Em análise</div>
<svg style="position:absolute;left:1546.5px;top:731.2px" width="13" height="16"><path d="M1.4,2.6 Q1.4,1 3,1 L8,1 L11.6,4.6 L11.6,13.4 Q11.6,15 10,15 L3,15 Q1.4,15 1.4,13.4 Z" fill="none" stroke="#111" stroke-width="1.35" stroke-linejoin="round"/><path d="M8,1 L11.6,4.6 L8,4.6 Z" fill="#111"/></svg>
<div class="row odd" style="top:754.7px;height:35.9px"></div>
<div class="t" style="left:266.7px;top:764.0px;font-size:16px;color:#5f6266;font-weight:normal;transform:scaleX(0.935);">578</div>
<div class="t" style="left:398.0px;top:764.0px;font-size:16px;color:#5f6266;font-weight:normal;transform:scaleX(0.890);">João Alves</div>
<div class="t" style="left:594.0px;top:764.0px;font-size:16px;color:#5f6266;font-weight:normal;transform:scaleX(0.890);">Casas d' agua - Biguaçu</div>
<div class="t" style="left:791.0px;top:764.0px;font-size:16px;color:#5f6266;font-weight:normal;transform:scaleX(0.890);">005 - Bloco: B - Nível: Térreo (Vila real)</div>
<div class="t" style="left:1118.5px;top:764.0px;font-size:16px;color:#5f6266;font-weight:normal;transform:scaleX(0.940);">03/11/2022 10:48:55</div>
<div class="t" style="left:1315.0px;top:764.0px;font-size:16px;color:#5f6266;font-weight:normal;transform:scaleX(0.905);">Aprovada</div>
<svg style="position:absolute;left:1546.5px;top:766.1px" width="13" height="16"><path d="M1.4,2.6 Q1.4,1 3,1 L8,1 L11.6,4.6 L11.6,13.4 Q11.6,15 10,15 L3,15 Q1.4,15 1.4,13.4 Z" fill="none" stroke="#111" stroke-width="1.35" stroke-linejoin="round"/><path d="M8,1 L11.6,4.6 L8,4.6 Z" fill="#111"/></svg>
<div style="position:absolute;left:1344px;top:742px;width:193px;height:40px;background:#48b58a;border-radius:10px 10px 0 0"></div>
<svg style="position:absolute;left:1353px;top:749px" width="19" height="14"><path d="M9,1 C4,1 1,3.5 1,6 C1,8 2.7,9.5 4.5,10.3 L4,13.5 L8,10.9 C8.3,11 8.7,11 9,11 C14,11 17,8.5 17,6 C17,3.5 14,1 9,1 Z" fill="#fff"/><circle cx="5.5" cy="6" r="1" fill="#48b58a"/><circle cx="9" cy="6" r="1" fill="#48b58a"/><circle cx="12.5" cy="6" r="1" fill="#48b58a"/></svg>
<div class="t" style="left:1380.6px;top:747.2px;font-size:16px;color:#fff;font-weight:normal;transform:scaleX(0.900);-webkit-text-stroke:.25px #fff">Converse com o Koper</div>
</body></html>
